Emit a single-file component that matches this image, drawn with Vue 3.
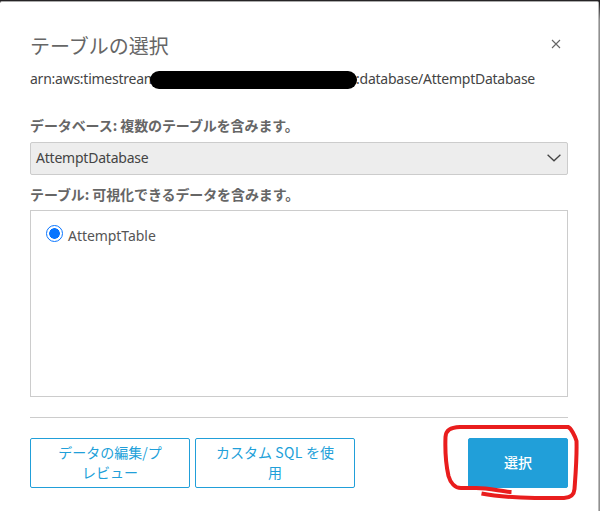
<script setup>
import { ref } from 'vue'

const tables = ['AttemptTable']
const selected = ref('AttemptTable')
</script>

<template>
  <div class="backdrop">
    <section class="dialog">
      <header class="head">
        <h1 class="title">テーブルの選択</h1>
        <svg class="close" viewBox="0 0 10 10" width="10" height="10">
          <path d="M1 1L9 9M9 1L1 9" fill="none" stroke="#666" stroke-width="1.1" />
        </svg>
      </header>

      <div class="arn">
        <span class="arn-start">arn:aws:timestream</span>
        <span class="arn-end">:database/AttemptDatabase</span>
        <span class="redaction"></span>
      </div>

      <div class="label label-db">データベース: 複数のテーブルを含みます。</div>
      <div class="select">
        <span class="name">AttemptDatabase</span>
        <svg class="chevron" viewBox="0 0 14 8" width="14" height="8">
          <path d="M0.6 0.8L7 6.8L13.4 0.8" fill="none" stroke="#444" stroke-width="1.3" />
        </svg>
      </div>

      <div class="label label-table">テーブル: 可視化できるデータを含みます。</div>
      <div class="list">
        <label v-for="table in tables" :key="table" class="option">
          <input v-model="selected" class="native" type="radio" name="table" :value="table" />
          <span class="radio"></span>
          <span class="option-name">{{ table }}</span>
        </label>
      </div>

      <footer class="foot">
        <button class="btn">データの編集/プ<br />レビュー</button>
        <button class="btn">カスタム <span class="latin">SQL</span> を使<br />用</button>
        <button class="btn primary">選択</button>
      </footer>
    </section>

    <svg class="scribble" viewBox="0 0 140 84" width="140" height="84">
      <path
        d="M71.500 72C61 71.500 50 68 36 68L21 68C15 68 10.500 63 8.500 56C6 45 5 30 5.500 17C6 10 10 7.500 20 7L128 7C131 8 135 16 136.500 21C137 38 135.500 55 134.500 69C134 75 131 77.500 124 78L95 78C75 77.500 57 76.500 41.500 73.500"
        fill="none" stroke="#e91d1d" stroke-width="4" stroke-linecap="butt" stroke-linejoin="round" />
    </svg>
  </div>
</template>

<style>
body {
  margin: 0;
  overflow: hidden;
}
</style>

<style scoped>
.backdrop {
  position: relative;
  box-sizing: border-box;
  width: 600px;
  height: 511px;
  padding: 1px 1px 0 0;
  background: linear-gradient(to bottom, #252325 0, #252325 3px, #909090 20px, #909090 100%);
  font-family: "Noto Sans", "Noto Sans CJK JP", sans-serif;
  font-size: 14px;
  color: #444;
}
.dialog {
  box-sizing: border-box;
  width: 599px;
  height: 510px;
  padding: 28px 30px 0;
  border-top: 1px solid #aaa;
  border-right: 1px solid #bbb;
  border-radius: 2px 2px 0 0;
  background: #fff;
}
.head {
  display: flex;
  justify-content: space-between;
  height: 32px;
}
.title {
  margin: 0;
  font: 400 20px/32px "Noto Sans CJK JP", sans-serif;
  color: #666;
}
.close {
  margin: 9px 7px 0 0;
}
.arn {
  position: relative;
  display: flex;
  justify-content: space-between;
  width: 505px;
  height: 53px;
  line-height: 34px;
}
.arn-start {
  letter-spacing: -0.25px;
}
.arn-end {
  letter-spacing: -0.25px;
}
.redaction {
  position: absolute;
  left: 120px;
  top: 9px;
  width: 207px;
  height: 18px;
  border-radius: 9px;
  background: #000;
}
.label {
  font: 700 14px/20px "Noto Sans CJK JP", sans-serif;
  letter-spacing: -0.1px;
  color: #666;
}
.label-db {
  height: 27px;
}
.select {
  display: flex;
  align-items: center;
  justify-content: space-between;
  box-sizing: border-box;
  width: 538px;
  height: 33px;
  padding: 0 6px 0 5px;
  border: 1px solid #ccc;
  border-radius: 2px;
  background: #ededed;
}
.name {
  margin-top: -2px;
  letter-spacing: -0.22px;
}
.chevron {
  margin-top: -2px;
}
.label-table {
  height: 26px;
  padding-top: 9px;
}
.list {
  box-sizing: border-box;
  width: 538px;
  height: 187px;
  padding: 14px 15px;
  border: 1px solid #ccc;
}
.option {
  display: flex;
  gap: 5px;
}
.native {
  position: absolute;
  opacity: 0;
}
.radio {
  box-sizing: border-box;
  width: 17px;
  height: 17px;
  border: 1.5px solid #0875ff;
  border-radius: 50%;
  background: radial-gradient(circle, #0875ff 5px, #fff 5.6px);
}
.option-name {
  line-height: 21px;
  letter-spacing: -0.05px;
  color: #555;
}
.foot {
  display: flex;
  gap: 5px;
  box-sizing: border-box;
  width: 538px;
  margin-top: 20px;
  padding-top: 20px;
  border-top: 1px solid #ccc;
}
.btn {
  width: 160px;
  height: 50px;
  padding: 0 0 2px;
  border: 1px solid #219fd9;
  border-radius: 2px;
  background: #fff;
  font: 400 14px/20px "Noto Sans CJK JP", sans-serif;
  color: #219fd9;
}
.latin {
  letter-spacing: 0.4px;
}
.primary {
  width: 100px;
  margin-left: auto;
  padding: 0 0 2px;
  background: #219fd9;
  font-weight: 500;
  color: #fff;
}
.scribble {
  position: absolute;
  left: 440px;
  top: 420px;
}
</style>
